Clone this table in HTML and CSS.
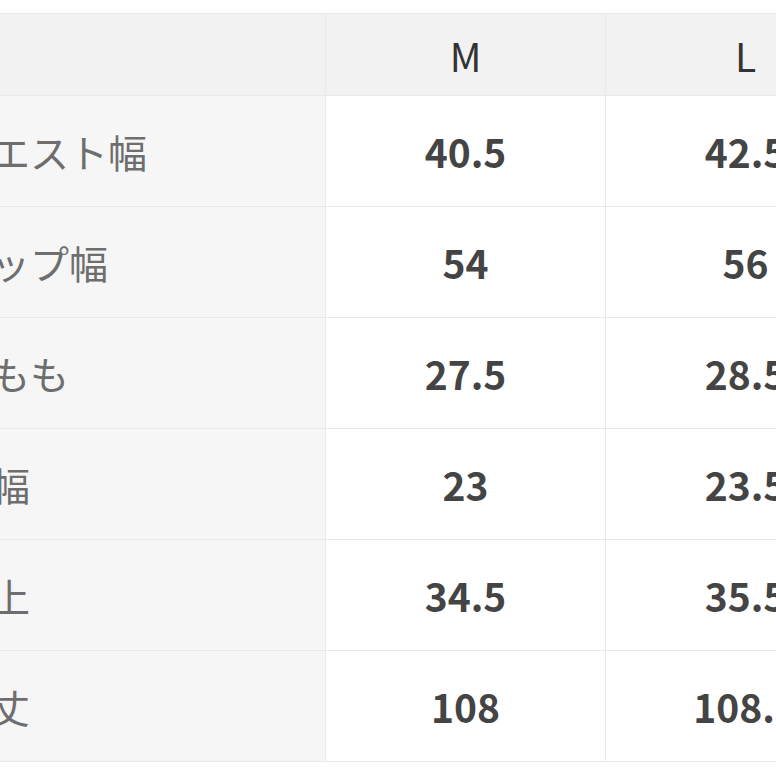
FILE: index.html
```html
<!DOCTYPE html>
<html lang="ja">
<head>
<meta charset="utf-8">
<link rel="stylesheet" href="styles.css">
</head>
<body>
<table class="size-table">
  <colgroup>
    <col class="col-label">
    <col class="col-size">
    <col class="col-size">
  </colgroup>
  <thead>
    <tr class="head-row">
      <th class="label"></th>
      <th>M</th>
      <th>L</th>
    </tr>
  </thead>
  <tbody>
    <tr><th class="label">ウエスト幅</th><td>40.5</td><td>42.5</td></tr>
    <tr><th class="label">ヒップ幅</th><td>54</td><td>56</td></tr>
    <tr><th class="label">太もも</th><td>27.5</td><td>28.5</td></tr>
    <tr><th class="label">裾幅</th><td>23</td><td>23.5</td></tr>
    <tr><th class="label">股上</th><td>34.5</td><td>35.5</td></tr>
    <tr><th class="label">総丈</th><td>108</td><td>108.5</td></tr>
  </tbody>
</table>
</body>
</html>
```
FILE: styles.css
```css
html, body {
  margin: 0;
  padding: 0;
  background: #ffffff;
  overflow: hidden;
}
body {
  font-family: "Noto Sans CJK JP", "Noto Sans", sans-serif;
}
.size-table {
  margin-top: 13px;
  margin-left: -64px;
  border-collapse: collapse;
  table-layout: fixed;
  width: 949px;
}
.col-label { width: 389px; }
.col-size { width: 280px; }
.size-table th,
.size-table td {
  border: 1px solid #e9e9e9;
  padding: 0;
  font-size: 39px;
  text-align: center;
  vertical-align: middle;
}
.head-row th {
  height: 81px;
  background: #f2f2f2;
  font-weight: 400;
  color: #333333;
}
.size-table tbody tr {
  height: 111px;
}
.size-table tbody th.label {
  background: #f6f6f6;
  color: #6e6e6e;
  font-weight: 400;
  text-align: left;
  padding-left: 15px;
}
.size-table td {
  font-weight: 700;
  color: #444444;
  background: #ffffff;
}
```
